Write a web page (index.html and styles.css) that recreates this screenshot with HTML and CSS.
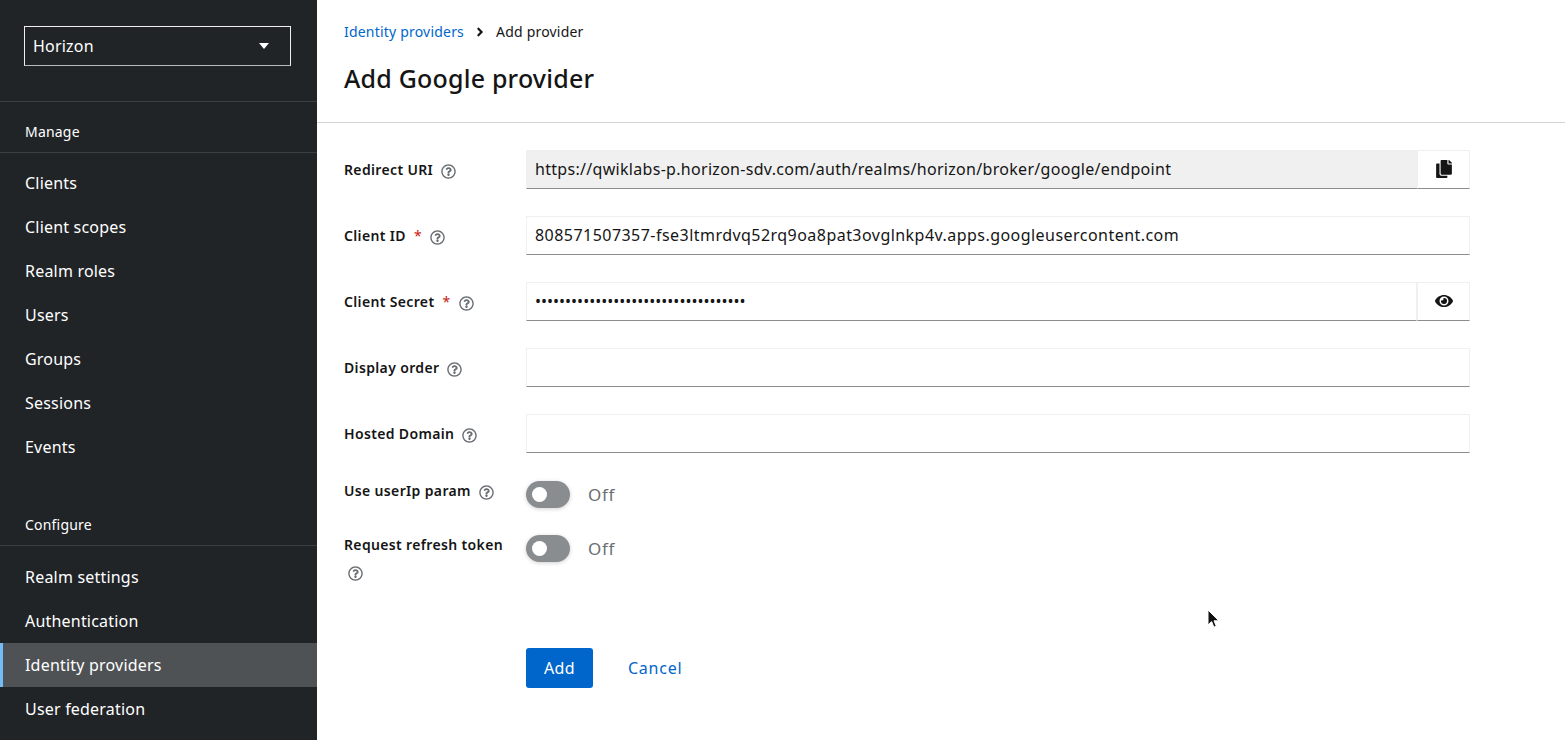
FILE: index.html
```html
<!DOCTYPE html>
<html lang="en">
<head>
    <meta charset="UTF-8">
    <meta name="viewport" content="width=device-width, initial-scale=1.0">
    <title>Add Google provider</title>
    <link rel="stylesheet" href="styles.css">
</head>
<body>
    <svg class="icon-defs" width="0" height="0">
        <symbol id="icon-help" viewBox="0 0 512 512"><path d="M256 8C119.043 8 8 119.083 8 256c0 136.997 111.043 248 248 248s248-111.003 248-248C504 119.083 392.957 8 256 8zm0 448c-110.532 0-200-89.431-200-200 0-110.495 89.472-200 200-200 110.491 0 200 89.471 200 200 0 110.569-89.429 200-200 200zm107.244-255.2c0 67.052-72.421 68.084-72.421 92.863V300c0 6.627-5.373 12-12 12h-45.647c-6.627 0-12-5.373-12-12v-8.659c0-35.745 27.1-50.034 47.579-61.516 17.561-9.845 28.324-16.541 28.324-29.579 0-17.246-21.999-28.693-39.784-28.693-23.189 0-33.894 10.977-48.942 29.969-4.057 5.12-11.46 6.071-16.666 2.124l-27.824-21.098c-5.107-3.872-6.251-11.066-2.644-16.363C184.846 131.491 214.94 112 261.794 112c49.071 0 101.45 38.304 101.45 88.8zM298 368c0 23.159-18.841 42-42 42s-42-18.841-42-42 18.841-42 42-42 42 18.841 42 42z"/></symbol>
    </svg>

    <div class="page">
        <nav class="sidebar">
            <div class="realm-wrap">
                <div class="realm-select">
                    <span>Horizon</span>
                    <span class="caret"></span>
                </div>
            </div>

            <h2 class="nav-title">Manage</h2>
            <ul class="nav-list">
                <li>Clients</li>
                <li>Client scopes</li>
                <li>Realm roles</li>
                <li>Users</li>
                <li>Groups</li>
                <li>Sessions</li>
                <li>Events</li>
            </ul>

            <h2 class="nav-title nav-title-second">Configure</h2>
            <ul class="nav-list nav-list-second">
                <li>Realm settings</li>
                <li>Authentication</li>
                <li class="active">Identity providers</li>
                <li>User federation</li>
            </ul>
        </nav>

        <main class="content">
            <header class="page-header">
                <div class="breadcrumb">
                    <a href="#">Identity providers</a>
                    <svg class="crumb-arrow" viewBox="0 0 256 512"><path d="M224.3 273l-136 136c-9.4 9.4-24.6 9.4-33.9 0l-22.6-22.6c-9.4-9.4-9.4-24.6 0-33.9l96.4-96.4-96.4-96.4c-9.4-9.4-9.4-24.6 0-33.9L54.3 103c9.4-9.4 24.6-9.4 33.9 0l136 136c9.5 9.4 9.5 24.6.1 34z"/></svg>
                    <span>Add provider</span>
                </div>
                <h1>Add Google provider</h1>
            </header>

            <form class="provider-form">
                <label class="form-label">Redirect URI <svg class="help"><use href="#icon-help"/></svg></label>
                <div class="input-group">
                    <input class="text-input" type="text" disabled value="https://qwiklabs-p.horizon-sdv.com/auth/realms/horizon/broker/google/endpoint">
                    <button type="button" class="icon-btn">
                        <svg class="copy-icon" viewBox="0 0 448 512"><path d="M320 448v40c0 13.255-10.745 24-24 24H24c-13.255 0-24-10.745-24-24V120c0-13.255 10.745-24 24-24h72v296c0 30.879 25.121 56 56 56h168zm0-344V0H152c-13.255 0-24 10.745-24 24v368c0 13.255 10.745 24 24 24h272c13.255 0 24-10.745 24-24V128H344c-13.2 0-24-10.8-24-24zm120.971-31.029L375.029 7.029A24 24 0 0 0 358.059 0H352v96h96v-6.059a24 24 0 0 0-7.029-16.97z"/></svg>
                    </button>
                </div>

                <label class="form-label">Client ID <span class="required">*</span> <svg class="help"><use href="#icon-help"/></svg></label>
                <input class="text-input text-input-id" type="text" value="808571507357-fse3ltmrdvq52rq9oa8pat3ovglnkp4v.apps.googleusercontent.com">

                <label class="form-label">Client Secret <span class="required">*</span> <svg class="help"><use href="#icon-help"/></svg></label>
                <div class="input-group">
                    <input class="text-input text-input-secret" type="password" value="abcdefghijklmnopqrstuvwxyz123456789">
                    <button type="button" class="icon-btn icon-btn-eye">
                        <svg class="eye-icon" viewBox="0 0 576 512"><path d="M572.52 241.4C518.29 135.59 410.93 64 288 64S57.68 135.64 3.48 241.41a32.35 32.35 0 0 0 0 29.19C57.71 376.41 165.07 448 288 448s230.32-71.64 284.52-177.41a32.35 32.35 0 0 0 0-29.19zM288 400a144 144 0 1 1 144-144 143.93 143.93 0 0 1-144 144zm0-240a95.31 95.31 0 0 0-25.31 3.79 47.85 47.85 0 0 1-66.9 66.9A95.78 95.78 0 1 0 288 160z"/></svg>
                    </button>
                </div>

                <label class="form-label">Display order <svg class="help"><use href="#icon-help"/></svg></label>
                <input class="text-input" type="text">

                <label class="form-label">Hosted Domain <svg class="help"><use href="#icon-help"/></svg></label>
                <input class="text-input" type="text">

                <label class="form-label form-label-switch">Use userIp param <svg class="help"><use href="#icon-help"/></svg></label>
                <div class="switch-row">
                    <span class="switch"></span>
                    <span class="switch-text">Off</span>
                </div>

                <label class="form-label form-label-switch">Request refresh token <svg class="help help-wrapped"><use href="#icon-help"/></svg></label>
                <div class="switch-row">
                    <span class="switch"></span>
                    <span class="switch-text">Off</span>
                </div>

                <div class="form-actions">
                    <button type="button" class="btn-primary">Add</button>
                    <a href="#" class="btn-link">Cancel</a>
                </div>
            </form>
        </main>
    </div>

    <!-- mouse pointer caught in the screenshot -->
    <svg class="pointer" viewBox="0 0 14 20"><path d="M1 1v15l3.6-3.4 2.3 5.6 2.4-1-2.3-5.4h4.9z" fill="#111" stroke="#fff" stroke-width="1"/></svg>
</body>
</html>
```

FILE: styles.css
```css
* {
    box-sizing: border-box;
}
html, body {
    height: 100%;
}
body {
    margin: 0;
    font-family: 'Noto Sans', 'Liberation Sans', sans-serif;
    font-size: 16px;
    color: #151515;
    background-color: #fff;
    overflow: hidden;
}
.icon-defs {
    position: absolute;
}
.page {
    display: flex;
    height: 740px;
}

/* sidebar */
.sidebar {
    width: 317px;
    flex-shrink: 0;
    background-color: #212427;
    color: #fff;
    letter-spacing: 0.2px;
    overflow: hidden;
}
.realm-wrap {
    padding: 26px 26px 35px 24px;
    border-bottom: 1px solid #3c3f42;
}
.realm-select {
    display: flex;
    align-items: center;
    justify-content: space-between;
    height: 40px;
    padding: 0 21px 0 8px;
    border: 1px solid #f0f0f0;
    border-bottom-color: #b8bbbe;
}
.caret {
    width: 0;
    height: 0;
    border-left: 5px solid transparent;
    border-right: 5px solid transparent;
    border-top: 6px solid #fff;
}
.nav-title {
    margin: 0;
    height: 51px;
    padding: 19px 25px 0;
    font-size: 14px;
    line-height: 21px;
    font-weight: 400;
    border-bottom: 1px solid #3c3f42;
}
.nav-title-second {
    margin-top: 27px;
    height: 50px;
    padding-top: 18px;
}
.nav-list {
    list-style: none;
    margin: 0;
    padding: 8px 0 0;
}
.nav-list-second {
    padding-top: 9px;
}
.nav-list li {
    height: 44px;
    line-height: 44px;
    padding-left: 25px;
}
.nav-list li.active {
    background-color: #4f5255;
    border-left: 3px solid #73bcf7;
    padding-left: 22px;
}

/* main area */
.content {
    flex: 1;
}
.page-header {
    height: 123px;
    padding: 21px 27px 0;
    border-bottom: 1px solid #d2d2d2;
}
.breadcrumb {
    display: flex;
    align-items: center;
    height: 21px;
    font-size: 14px;
    line-height: 21px;
    letter-spacing: 0.2px;
}
.breadcrumb a {
    color: #06c;
    text-decoration: none;
}
.crumb-arrow {
    width: 8px;
    height: 14px;
    margin: 0 12px;
    fill: #151515;
}
.page-header h1 {
    margin: 18px 0 0;
    font-size: 25px;
    line-height: 36px;
    font-weight: 500;
    letter-spacing: 0.2px;
}

/* form */
.provider-form {
    display: grid;
    grid-template-columns: 182px 944px;
    row-gap: 27px;
    padding: 27px 0 0 27px;
}
.form-label {
    padding: 9px 16px 0 0;
    font-size: 14px;
    line-height: 21px;
    font-weight: 600;
    letter-spacing: 0.35px;
}
.form-label-switch {
    padding-top: 0;
}
.required {
    color: #c9190b;
    margin-left: 4px;
    font-weight: 400;
}
.help {
    width: 15px;
    height: 15px;
    margin-left: 4px;
    vertical-align: -4px;
    fill: #6a6e73;
}
.help-wrapped {
    display: block;
    margin: 11px 0 0 4px;
}
.text-input {
    display: block;
    width: 100%;
    height: 39px;
    padding: 0 8px 2px;
    font: inherit;
    letter-spacing: 0.3px;
    color: #151515;
    background-color: #fff;
    border: 1px solid #f0f0f0;
    border-bottom-color: #8a8d90;
    border-radius: 0;
    outline: none;
}
.text-input-id {
    letter-spacing: 0.46px;
}
.text-input-secret {
    letter-spacing: 0;
}
.text-input:disabled {
    background-color: #f0f0f0;
    color: #151515;
    opacity: 1;
}
.input-group {
    display: flex;
}
.input-group .text-input {
    flex: 1;
    min-width: 0;
}
.icon-btn {
    display: flex;
    align-items: center;
    justify-content: center;
    width: 52px;
    height: 39px;
    padding: 0 0 2px;
    background-color: #fff;
    border: 1px solid #f0f0f0;
    border-bottom-color: #8a8d90;
    border-left: none;
}
.icon-btn-eye {
    width: 53px;
    border-left: 1px solid #f0f0f0;
}
.copy-icon {
    width: 16px;
    height: 18px;
    fill: #151515;
}
.eye-icon {
    width: 18px;
    height: 16px;
    fill: #151515;
}
.switch-row {
    display: flex;
    align-items: center;
    height: 26px;
    margin-top: 1px;
}
.switch {
    position: relative;
    width: 44px;
    height: 27px;
    border-radius: 14px;
    background-color: #8a8d90;
    box-shadow: 0 1px 4px rgba(0, 0, 0, 0.18);
}
.switch::before {
    content: "";
    position: absolute;
    left: 6px;
    top: 6px;
    width: 15px;
    height: 15px;
    border-radius: 50%;
    background-color: #fff;
}
.switch-text {
    margin-left: 18px;
    font-size: 17px;
    letter-spacing: 0.7px;
    color: #6a6e73;
}
.form-actions {
    grid-column: 2;
    display: flex;
    align-items: center;
    margin-top: 40px;
}
.btn-primary {
    width: 67px;
    height: 40px;
    padding: 0;
    font: inherit;
    letter-spacing: 0.4px;
    color: #fff;
    background-color: #06c;
    border: none;
    border-radius: 3px;
}
.btn-link {
    margin-left: 35px;
    letter-spacing: 0.75px;
    color: #06c;
    text-decoration: none;
}
.pointer {
    position: absolute;
    left: 1207px;
    top: 609px;
    width: 14px;
    height: 20px;
}
```
